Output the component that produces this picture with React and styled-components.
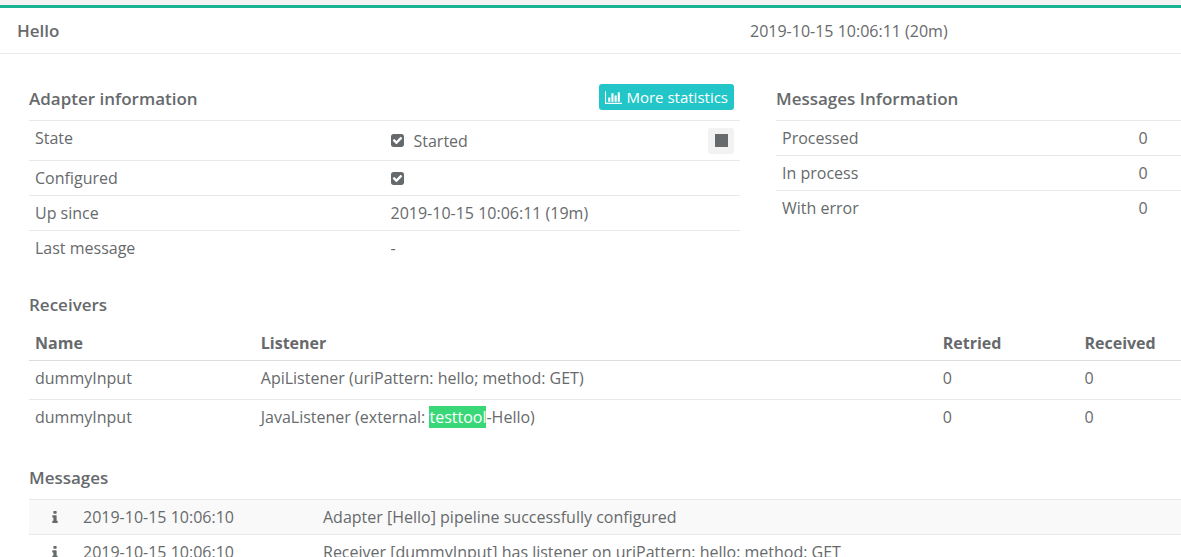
import React from "react";
import styled, { createGlobalStyle } from "styled-components";

const GlobalStyle = createGlobalStyle`
  * { box-sizing: border-box; }
  html { scrollbar-width: none; }
  body {
    margin: 0;
    background: #fff;
    color: #676a6c;
    font-family: "Open Sans", "Noto Sans", sans-serif;
    font-size: 16px;
    line-height: 22px;
  }
`;

const Panel = styled.main`
  border-top: 5px solid #f3f3f4;
`;

const PanelHeader = styled.header`
  display: grid;
  grid-template-columns: 733fr 431fr;
  align-items: center;
  padding: 12px 0 11px 17px;
  border-top: 3px solid #1ab394;
  border-bottom: 1px solid #e7eaec;
`;

const Title = styled.h2`
  margin: 0;
  font-size: 17px;
  font-weight: 600;
  line-height: 22px;
`;

const Content = styled.div`
  padding: 30px 0 0 29px;
`;

const Columns = styled.div`
  display: grid;
  grid-template-columns: minmax(0, 711fr) minmax(0, 405fr);
  column-gap: 36px;
`;

const Section = styled.section`
  margin-top: ${(p) => p.$top || 0}px;
`;

const SectionHead = styled.div`
  display: flex;
  justify-content: space-between;
  align-items: flex-end;
  min-height: ${(p) => (p.$tall ? 26 : 22)}px;
  padding-right: 6px;
  margin-bottom: 10px;
`;

const StatsButton = styled.button`
  display: flex;
  align-items: center;
  gap: 4px;
  height: 26px;
  padding: 0 6px;
  border: 0;
  border-radius: 3px;
  background: #23c6c8;
  color: #fff;
  font: inherit;
  font-size: 15px;
`;

const StopButton = styled.button`
  display: flex;
  align-items: center;
  justify-content: center;
  width: 26px;
  height: 26px;
  padding: 0;
  border: 0;
  border-radius: 3px;
  background: #f2f2f2;
  color: #676a6c;
`;

const Table = styled.table`
  width: 100%;
  table-layout: fixed;
  border-collapse: separate;
  border-spacing: 0;
`;

const Col = styled.col`
  width: ${(p) => p.$width};
`;

const Cell = styled.td`
  padding: 6px;
  border-top: 1px solid #e7eaec;
  vertical-align: top;
  text-align: left;
  font-weight: 400;
  white-space: nowrap;
`;

const HeadCell = styled.th`
  padding: 6px;
  border-bottom: 1px solid #ddd;
  text-align: left;
  font-weight: 700;
`;

const ReceiverCell = styled(Cell)`
  padding: 6px 6px 10px;
  border-top-width: ${(p) => (p.$first ? 0 : 1)}px;
`;

const MessageRow = styled.tr`
  background: ${(p) => (p.$striped ? "#f9f9f9" : "#fff")};
`;

const IconCell = styled(Cell)`
  padding-left: 10px;
  text-align: center;
`;

const StateLine = styled.div`
  display: flex;
  align-items: center;
  justify-content: space-between;
  height: 27px;
`;

const Status = styled.span`
  display: flex;
  align-items: center;
  gap: 10px;
  height: 22px;
`;

const Mark = styled.mark`
  display: inline-block;
  background: #38d878;
  color: #fff;
`;

const CheckIcon = () => (
  <svg width="13" height="13" viewBox="0 128 1536 1536" fill="currentColor" role="img" aria-label="Yes">
    <path d="M685 1299l614-614q19-19 19-45t-19-45l-102-102q-19-19-45-19t-45 19l-467 467-211-211q-19-19-45-19t-45 19l-102 102q-19 19-19 45t19 45l358 358q19 19 45 19t45-19zM1536 416v960q0 119-84.5 203.5t-203.5 84.5h-960q-119 0-203.5-84.5t-84.5-203.5v-960q0-119 84.5-203.5t203.5-84.5h960q119 0 203.5 84.5t84.5 203.5z" />
  </svg>
);

const ChartIcon = () => (
  <svg width="17" height="15" viewBox="0 0 2048 1792" fill="currentColor" aria-hidden="true">
    <path d="M640 896v512h-256v-512h256zM1024 384v1024h-256v-1024h256zM2048 1536v128h-2048v-1536h128v1408h1920zM1408 640v768h-256v-768h256zM1792 256v1152h-256v-1152h256z" />
  </svg>
);

const StopIcon = () => (
  <svg width="13" height="13" viewBox="0 0 13 13" fill="currentColor" aria-hidden="true">
    <path d="M0 0h13v13H0z" />
  </svg>
);

const InfoIcon = () => (
  <svg width="6" height="12" viewBox="0 128 640 1408" fill="currentColor" role="img" aria-label="Info">
    <path d="M640 1344v128q0 26-19 45t-45 19h-512q-26 0-45-19t-19-45v-128q0-26 19-45t45-19h64v-384h-64q-26 0-45-19t-19-45v-128q0-26 19-45t45-19h384q26 0 45 19t19 45v576h64q26 0 45 19t19 45zM512 192v192q0 26-19 45t-45 19h-256q-26 0-45-19t-19-45v-192q0-26 19-45t45-19h256q26 0 45 19t19 45z" />
  </svg>
);

const counts = ["Processed", "In process", "With error"];
const receivers = [
  ["dummyInput", <>ApiListener (uriPattern: hello; method: GET)</>],
  ["dummyInput", <>JavaListener (external: <Mark>testtool</Mark>-Hello)</>],
];
const messages = [
  "Adapter [Hello] pipeline successfully configured",
  "Receiver [dummyInput] has listener on uriPattern: hello; method: GET",
];

export default function App() {
  return (
    <>
      <GlobalStyle />
      <Panel>
        <PanelHeader>
          <Title>Hello</Title>
          <span>2019-10-15 10:06:11 (20m)</span>
        </PanelHeader>
        <Content>
          <Columns>
            <Section>
              <SectionHead $tall>
                <Title>Adapter information</Title>
                <StatsButton type="button"><ChartIcon />More statistics</StatsButton>
              </SectionHead>
              <Table>
                <tbody>
                  <tr>
                    <Cell as="th" scope="row">State</Cell>
                    <Cell>
                      <StateLine>
                        <Status><CheckIcon />Started</Status>
                        <StopButton type="button" aria-label="Stop adapter"><StopIcon /></StopButton>
                      </StateLine>
                    </Cell>
                  </tr>
                  <tr><Cell as="th" scope="row">Configured</Cell><Cell><Status><CheckIcon /></Status></Cell></tr>
                  <tr><Cell as="th" scope="row">Up since</Cell><Cell>2019-10-15 10:06:11 (19m)</Cell></tr>
                  <tr><Cell as="th" scope="row">Last message</Cell><Cell>-</Cell></tr>
                </tbody>
              </Table>
            </Section>
            <Section>
              <SectionHead $tall><Title>Messages Information</Title></SectionHead>
              <Table>
                <colgroup><Col $width="88%" /><col /></colgroup>
                <tbody>
                  {counts.map((name) => (
                    <tr key={name}><Cell as="th" scope="row">{name}</Cell><Cell>0</Cell></tr>
                  ))}
                </tbody>
              </Table>
            </Section>
          </Columns>

          <Section $top={29}>
            <SectionHead><Title>Receivers</Title></SectionHead>
            <Table>
              <colgroup>
                <Col $width="19.6%" />
                <Col $width="59.2%" />
                <Col $width="12.3%" />
                <col />
              </colgroup>
              <thead>
                <tr>
                  {["Name", "Listener", "Retried", "Received"].map((h) => (
                    <HeadCell key={h} scope="col">{h}</HeadCell>
                  ))}
                </tr>
              </thead>
              <tbody>
                {receivers.map(([name, listener], i) => (
                  <tr key={i}>
                    <ReceiverCell $first={i === 0}>{name}</ReceiverCell>
                    <ReceiverCell $first={i === 0}>{listener}</ReceiverCell>
                    <ReceiverCell $first={i === 0}>0</ReceiverCell>
                    <ReceiverCell $first={i === 0}>0</ReceiverCell>
                  </tr>
                ))}
              </tbody>
            </Table>
          </Section>

          <Section $top={29}>
            <SectionHead><Title>Messages</Title></SectionHead>
            <Table>
              <colgroup>
                <Col $width="48px" />
                <Col $width="240px" />
                <col />
              </colgroup>
              <tbody>
                {messages.map((text, i) => (
                  <MessageRow key={text} $striped={i === 0}>
                    <IconCell><InfoIcon /></IconCell>
                    <Cell>2019-10-15 10:06:10</Cell>
                    <Cell>{text}</Cell>
                  </MessageRow>
                ))}
              </tbody>
            </Table>
          </Section>
        </Content>
      </Panel>
    </>
  );
}
